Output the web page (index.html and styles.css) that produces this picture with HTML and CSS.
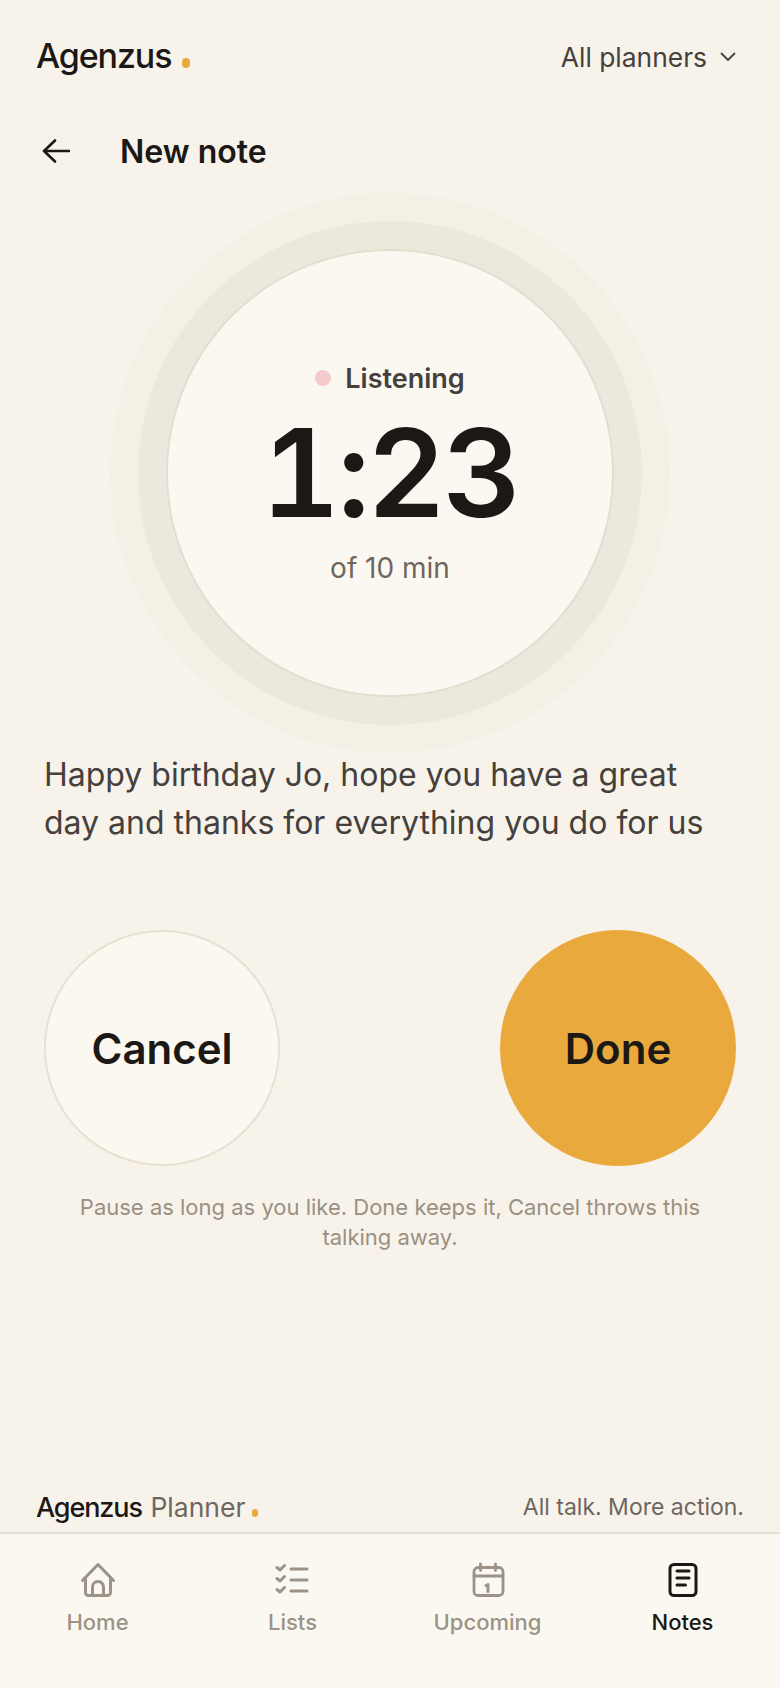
FILE: index.html
```html
<!DOCTYPE html>
<html lang="en">
<head>
  <meta charset="UTF-8" />
  <meta name="viewport" content="width=device-width, initial-scale=1.0"/>
  <title>New note</title>
  <link rel="stylesheet" href="styles.css">
</head>
<body>
  <header class="topbar">
    <div class="brand">Agenzus<span class="brand-dot"></span></div>
    <div class="planner-select">
      All planners
      <svg class="chevron" viewBox="0 0 16 10" fill="none" stroke="currentColor" stroke-width="1.8" stroke-linecap="round" stroke-linejoin="round"><path d="M1.5 1.5 8 8l6.5-6.5"/></svg>
    </div>
  </header>

  <main>
    <div class="title-row">
      <svg class="back" viewBox="0 0 28 24" fill="none" stroke="currentColor" stroke-width="2.6" stroke-linecap="round" stroke-linejoin="round"><path d="M27 12H2M13 1.500 2 12l11 10.500"/></svg>
      <h1>New note</h1>
    </div>

    <div class="ring-outer">
      <div class="ring-middle">
        <div class="ring-inner">
          <div class="status"><span class="status-dot"></span>Listening</div>
          <div class="timer">1:23</div>
          <div class="limit">of 10 min</div>
        </div>
      </div>
    </div>

    <p class="transcript">Happy birthday Jo, hope you have a great day and thanks for everything you do for us</p>

    <div class="actions">
      <button class="round-btn cancel">Cancel</button>
      <button class="round-btn done">Done</button>
    </div>

    <p class="hint">Pause as long as you like. Done keeps it, Cancel throws this talking away.</p>
  </main>

  <div class="brandline">
    <div class="brandline-name"><b>Agenzus</b> Planner<span class="brand-dot small"></span></div>
    <div class="tagline">All talk. More action.</div>
  </div>

  <nav class="tabs">
    <a class="tab">
      <svg viewBox="0 0 36 36" fill="none" stroke="currentColor" stroke-width="3" stroke-linecap="round" stroke-linejoin="round"><path d="M2.500 18.500 18 2.500l15.500 16"/><path d="M5.500 17v13.500a3 3 0 0 0 3 3h19a3 3 0 0 0 3-3V17"/><path d="M12.500 33.500V25a5.500 5.500 0 0 1 11 0v8.500"/></svg>
      Home
    </a>
    <a class="tab">
      <svg viewBox="0 0 36 36" fill="none" stroke="currentColor" stroke-width="3" stroke-linecap="round" stroke-linejoin="round"><path d="M2 5.500 5 8l4.500-4.500M2 16.500 5 19l4.500-4.500M2 27.500 5 30l4.500-4.500"/><path d="M16 7h16M16 18h16M16 29h16"/></svg>
      Lists
    </a>
    <a class="tab">
      <svg viewBox="0 0 36 36" fill="none" stroke="currentColor" stroke-width="2.800" stroke-linecap="round" stroke-linejoin="round"><rect x="4" y="5.500" width="29" height="28" rx="4"/><path d="M10.500 2v6.500M25.500 2v6.500M4 14h29"/><path d="M16 23.500l2-1v7" stroke-width="3"/></svg>
      Upcoming
    </a>
    <a class="tab active">
      <svg viewBox="0 0 36 36" fill="none" stroke="currentColor" stroke-width="3" stroke-linecap="round" stroke-linejoin="round"><rect x="5" y="2.500" width="26" height="31" rx="4"/><path d="M12 9h12M12 16h12M12 23h8.500"/></svg>
      Notes
    </a>
  </nav>
</body>
</html>
```

FILE: styles.css
```css
* {
  box-sizing: border-box;
}

html, body {
  height: 100%;
  margin: 0;
}

body {
  display: flex;
  flex-direction: column;
  min-height: 100vh;
  font-family: Inter, "Liberation Sans", sans-serif;
  background: #f7f3eb;
  color: #1c1815;
}

.topbar {
  display: flex;
  justify-content: space-between;
  align-items: center;
  padding: 36px 44px 0 36px;
  height: 76px;
}

.brand {
  font-size: 34px;
  font-weight: 550;
  letter-spacing: -1.1px;
  line-height: 40px;
}

.brand-dot {
  display: inline-block;
  width: 8px;
  height: 10px;
  margin-left: 11px;
  border-radius: 4px;
  background: #e9a93c;
}

.brand-dot.small {
  width: 6px;
  height: 8px;
  margin-left: 7px;
  border-radius: 3px;
}

.planner-select {
  display: flex;
  align-items: center;
  gap: 13px;
  margin-top: 2px;
  font-size: 26.400px;
  color: #45403b;
}

.chevron {
  width: 16px;
  height: 10px;
}

main {
  flex: 1;
  padding: 0 44px;
}

.title-row {
  display: flex;
  align-items: center;
  gap: 50px;
  height: 40px;
  margin-top: 55px;
}

.back {
  width: 28px;
  height: 24px;
  color: #1c1815;
  flex: none;
  margin-left: -2px;
}

h1 {
  margin: 0;
  font-size: 32px;
  font-weight: 600;
}

.ring-outer {
  width: 560px;
  height: 560px;
  margin: 22px auto 0;
  padding: 28px;
  border-radius: 50%;
  background: #f3f0e6;
}

.ring-middle {
  width: 100%;
  height: 100%;
  padding: 28px;
  border-radius: 50%;
  background: #ebe9de;
}

.ring-inner {
  width: 100%;
  height: 100%;
  display: flex;
  flex-direction: column;
  align-items: center;
  justify-content: center;
  border: 2px solid #e3dece;
  border-radius: 50%;
  background: #fbf8f1;
}

.status {
  display: flex;
  align-items: center;
  gap: 14px;
  margin-bottom: 8px;
  font-size: 27px;
  font-weight: 600;
  color: #45403b;
}

.status-dot {
  width: 16px;
  height: 16px;
  border-radius: 50%;
  background: #f4caca;
}

.timer {
  font-size: 122px;
  font-weight: 600;
  font-variant-numeric: tabular-nums;
  letter-spacing: -3px;
  line-height: 140px;
}

.limit {
  margin-top: 8px;
  font-size: 28px;
  color: #6e665e;
}

.transcript {
  margin: -2px 0 0;
  font-size: 32px;
  line-height: 48px;
  color: #45403b;
}

.actions {
  display: flex;
  justify-content: space-between;
  margin-top: 83px;
}

.round-btn {
  width: 236px;
  height: 236px;
  border-radius: 50%;
  font-family: inherit;
  font-size: 42px;
  font-weight: 600;
  color: #1c1815;
}

.cancel {
  border: 2px solid #e8e1d0;
  background: #fbf8f1;
}

.done {
  border: 0;
  background: #e9a93c;
}

.hint {
  margin: 26px 20px 0;
  font-size: 22px;
  line-height: 30px;
  text-align: center;
  color: #9a9082;
}

.brandline {
  display: flex;
  justify-content: space-between;
  align-items: center;
  padding: 0 36px;
  height: 50px;
}

.brandline-name {
  font-size: 26.500px;
  color: #6e665e;
}

.brandline-name b {
  margin-right: 1px;
  font-size: 27px;
  font-weight: 550;
  color: #1c1815;
  letter-spacing: -1.100px;
}

.tagline {
  font-size: 23px;
  color: #6e665e;
}

.tabs {
  display: grid;
  grid-template-columns: repeat(4, 1fr);
  height: 156px;
  padding-top: 28px;
  border-top: 2px solid #e6e0d2;
  background: #fbf8f1;
}

.tab {
  display: flex;
  flex-direction: column;
  align-items: center;
  gap: 11px;
  font-size: 22px;
  font-weight: 500;
  color: #9c9285;
}

.tab svg {
  width: 36px;
  height: 36px;
}

.tab.active {
  color: #1c1815;
}
```
